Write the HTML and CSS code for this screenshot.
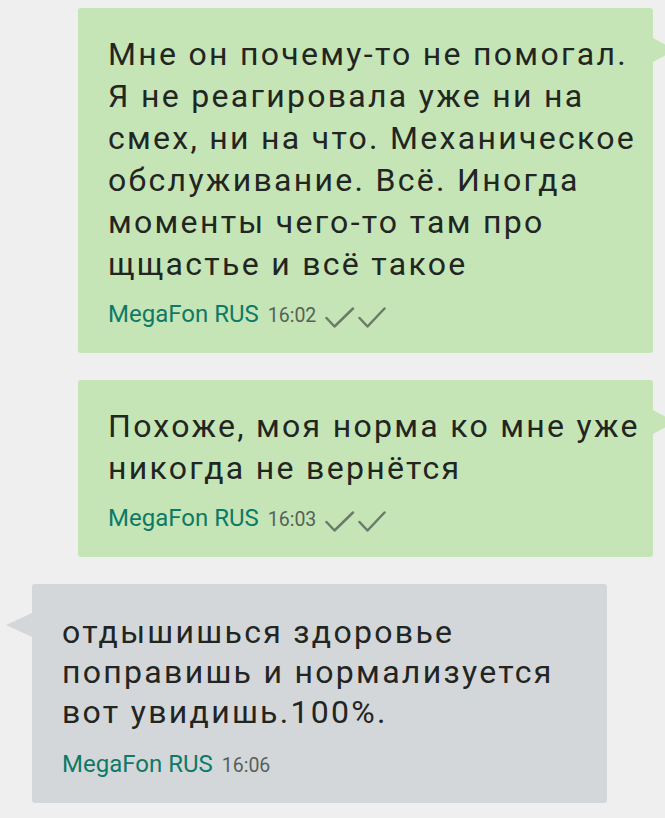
FILE: index.html
```html
<!DOCTYPE html>
<html lang="ru">
<head>
<meta charset="utf-8">
<title>Чат</title>
<link rel="stylesheet" href="styles.css">
</head>
<body>
<div class="chat">
  <div class="msg out">
    <div class="text">Мне он почему-то не помогал. Я не реагировала уже ни на смех, ни на что. Механическое обслуживание. Всё. Иногда моменты чего-то там про щщастье и всё такое</div>
    <div class="meta"><span class="sender">MegaFon RUS</span><span class="time">16:02</span><svg class="checks" width="61" height="21" viewBox="0 0 61 21"><polyline points="1.5,11 9.5,19.5 28,1.5"/><polyline points="34.5,11 42.5,19.5 59.5,1.5"/></svg></div>
  </div>
  <div class="msg out">
    <div class="text">Похоже, моя норма ко мне уже никогда не вернётся</div>
    <div class="meta"><span class="sender">MegaFon RUS</span><span class="time">16:03</span><svg class="checks" width="61" height="21" viewBox="0 0 61 21"><polyline points="1.5,11 9.5,19.5 28,1.5"/><polyline points="34.5,11 42.5,19.5 59.5,1.5"/></svg></div>
  </div>
  <div class="msg in">
    <div class="text">отдышишься здоровье поправишь и нормализуется вот увидишь.100%.</div>
    <div class="meta"><span class="sender">MegaFon RUS</span><span class="time">16:06</span></div>
  </div>
</div>
</body>
</html>
```

FILE: styles.css
```css
html, body {
  margin: 0;
  padding: 0;
}
body {
  width: 665px;
  height: 818px;
  overflow: hidden;
  background: #efefef;
  font-family: Roboto, "Noto Sans", "DejaVu Sans", sans-serif;
  color: #222522;
}
.chat {
  display: flex;
  flex-direction: column;
  padding-top: 8px;
}
.msg {
  position: relative;
  width: 575px;
  box-sizing: border-box;
  padding: 25px 5px 24px 30px;
  border-radius: 3px;
}
.msg + .msg {
  margin-top: 27px;
}
.msg.out {
  margin-left: 78px;
  background: #c5e5b6;
}
.msg.in {
  margin-left: 32px;
  background: #d4d7da;
  padding-top: 28px;
}
.msg.out::after {
  content: "";
  position: absolute;
  right: -22px;
  top: 30px;
  border-style: solid;
  border-width: 12.5px 0 12.5px 22px;
  border-color: transparent transparent transparent #c5e5b6;
}
.msg.in::before {
  content: "";
  position: absolute;
  left: -26px;
  top: 29px;
  border-style: solid;
  border-width: 12.5px 26px 12.5px 0;
  border-color: transparent #d4d7da transparent transparent;
}
.text {
  font-size: 32px;
  line-height: 42px;
  letter-spacing: 2.3px;
}
.msg.in .text {
  line-height: 40px;
}
.meta {
  display: flex;
  align-items: baseline;
  height: 30px;
  margin-top: 14px;
  line-height: 30px;
  white-space: nowrap;
}
.msg.in .meta {
  margin-top: 17px;
}
.sender {
  font-size: 24px;
  color: #0d7a67;
}
.time {
  font-size: 19.5px;
  color: #56615a;
  margin-left: 9px;
}
.checks {
  align-self: flex-start;
  margin-top: 8px;
  margin-left: 9px;
  fill: none;
  stroke: #6b7a6b;
  stroke-width: 2.5;
  stroke-linecap: round;
  stroke-linejoin: round;
}
```
